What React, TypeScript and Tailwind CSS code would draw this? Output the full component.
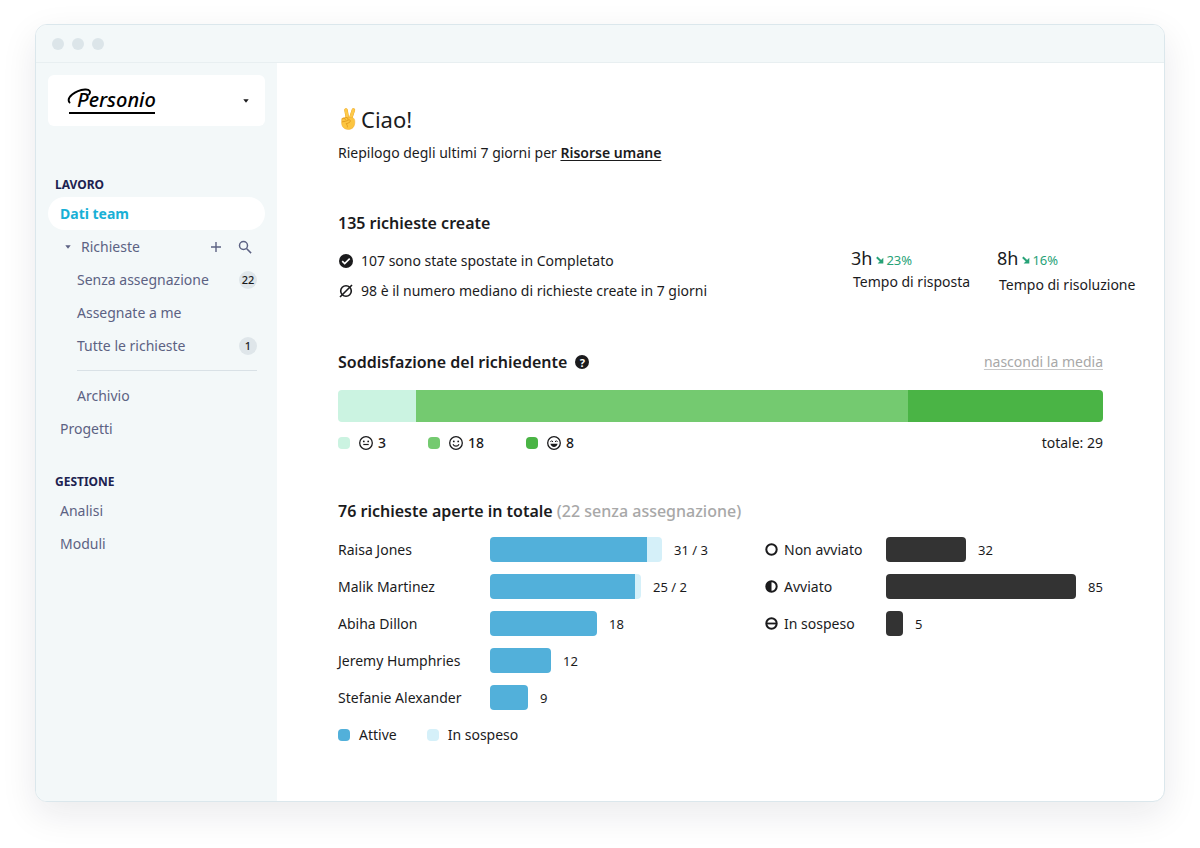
import { useState } from "react";

type NavItem = { label: string; badge?: number };

const REQUESTS: NavItem[] = [
  { label: "Senza assegnazione", badge: 22 },
  { label: "Assegnate a me" },
  { label: "Tutte le richieste", badge: 1 },
];

const ASSIGNEES = [
  { name: "Raisa Jones", active: 157, pending: 15, value: "31 / 3" },
  { name: "Malik Martinez", active: 145, pending: 6, value: "25 / 2" },
  { name: "Abiha Dillon", active: 107, pending: 0, value: "18" },
  { name: "Jeremy Humphries", active: 61, pending: 0, value: "12" },
  { name: "Stefanie Alexander", active: 38, pending: 0, value: "9" },
];

const STATUSES: { name: string; icon: "open" | "half" | "hold"; width: number; value: number }[] = [
  { name: "Non avviato", icon: "open", width: 80, value: 32 },
  { name: "Avviato", icon: "half", width: 190, value: 85 },
  { name: "In sospeso", icon: "hold", width: 17, value: 5 },
];

const RATINGS: { mood: "neutral" | "smile" | "laugh"; count: number; share: number; color: string }[] = [
  { mood: "neutral", count: 3, share: 78, color: "bg-[#cbf3e1]" },
  { mood: "smile", count: 18, share: 492, color: "bg-[#74ca70]" },
  { mood: "laugh", count: 8, share: 195, color: "bg-[#4ab445]" },
];

function Caret() {
  return (
    <svg width="6" height="4" viewBox="0 0 6 4" fill="currentColor" aria-hidden="true">
      <path d="M0.3 0.3h5.4L3 3.7z" />
    </svg>
  );
}

function VictoryHand() {
  return (
    <svg width="19" height="24" viewBox="0 0 19 24" aria-hidden="true">
      <g strokeLinecap="round" strokeLinejoin="round">
        <path d="M9.6 12 8 3" stroke="#eda62a" strokeWidth="3.6" />
        <path d="M12.4 12 15.400 3" stroke="#eda62a" strokeWidth="3.6" />
        <path d="M9.6 12 8 3" stroke="#fdca4a" strokeWidth="2.8" />
        <path d="M12.4 12 15.400 3" stroke="#fdca4a" strokeWidth="2.8" />
        <path
          d="M4.200 11.4c1.4-1 3-1.200 4.800-.8l5.200-.2c2 .6 2.800 2.400 2.600 5-.2 4.400-2.400 7-6.600 7-3.800 0-6.200-2.200-6.600-6.200-.1-2 0-3.900.6-4.800z"
          fill="#fcc540"
          stroke="#f0ab30"
          strokeWidth="0.5"
        />
        <path d="M4 12.200c1.400-1.600 3-1.200 3.400.6M7 11c1.600-1.200 3.200-.4 3 1.600" fill="none" stroke="#dd9418" strokeWidth="0.8" />
        <path d="M4.400 14.800c2.400-.4 4.600-.8 6.200-1.800 1.400-.6 2.400.8 1.400 1.900-1 1-2.600 1.500-4 1.900 1.200 1 1.600 2 1.400 3.200" fill="none" stroke="#dd9418" strokeWidth="0.8" />
      </g>
    </svg>
  );
}

function CheckIcon() {
  return (
    <svg width="14" height="14" viewBox="0 0 14 14" aria-hidden="true">
      <circle cx="7" cy="7" r="7" fill="#1b1b1d" />
      <path d="m3.200 7.200 2.500 2.400 5-5" fill="none" stroke="#fff" strokeWidth="1.600" />
    </svg>
  );
}

function MedianIcon() {
  return (
    <svg width="14" height="14" viewBox="0 0 14 14" fill="none" stroke="#1b1b1d" strokeWidth="1.600" aria-hidden="true">
      <circle cx="7" cy="7" r="5.300" />
      <path d="M1 13 13 1" />
    </svg>
  );
}

function Face({ mood }: { mood: "neutral" | "smile" | "laugh" }) {
  return (
    <svg width="14" height="14" viewBox="0 0 14 14" fill="none" stroke="#1b1b1d" strokeWidth="1.300" aria-hidden="true">
      <circle cx="7" cy="7" r="6.300" />
      {mood === "laugh" ? (
        <>
          <path d="M3.400 6 4.700 4.700 6 6M8 6l1.300-1.300L10.600 6" strokeWidth="1" />
          <path d="M3.400 7.800h7.200c-.4 2-1.800 3.200-3.600 3.200s-3.200-1.200-3.600-3.200z" fill="#1b1b1d" stroke="none" />
        </>
      ) : (
        <>
          <circle cx="4.800" cy="5.400" r="0.900" fill="#1b1b1d" stroke="none" />
          <circle cx="9.200" cy="5.400" r="0.900" fill="#1b1b1d" stroke="none" />
          {mood === "neutral" ? (
            <path d="M4.300 8.500h5.400" strokeWidth="1.200" />
          ) : (
            <path d="M4 8.200c.6 1.300 1.700 1.900 3 1.900s2.400-.6 3-1.900" strokeWidth="1.100" />
          )}
        </>
      )}
    </svg>
  );
}

function StatusIcon({ kind }: { kind: "open" | "half" | "hold" }) {
  return (
    <svg width="13" height="13" viewBox="0 0 13 13" fill="none" stroke="#1b1b1d" strokeWidth="2" aria-hidden="true">
      <circle cx="6.500" cy="6.500" r="5.200" />
      {kind === "half" && <path d="M6.500 1.300a5.200 5.200 0 0 0 0 10.400z" fill="#1b1b1d" stroke="none" />}
      {kind === "hold" && <path d="M1.300 6.500h10.400" strokeWidth="1.800" />}
    </svg>
  );
}

function TrendArrow() {
  return (
    <svg width="8" height="8" viewBox="0 0 8 8" aria-hidden="true">
      <path d="m.8 1.200 4 3.700" stroke="#27a277" strokeWidth="2" />
      <path d="M7.300 1.800v5.600H1.600z" fill="#27a277" />
    </svg>
  );
}

function Badge({ value }: { value: number }) {
  return (
    <span className="grid h-[18px] w-[18px] place-items-center rounded-full bg-[#dfe6ea] text-[11px] leading-none font-medium text-[#1b1b1d]">
      {value}
    </span>
  );
}

function Logo() {
  return (
    <span className="relative flex w-[90px] flex-col text-black">
      <svg
        className="absolute -left-px top-0"
        width="24"
        height="18"
        viewBox="0 0 24 18"
        fill="none"
        stroke="currentColor"
        strokeWidth="1.900"
        strokeLinecap="round"
        aria-hidden="true"
      >
        <path d="M2.500 14.500C-1 9.500 8 2.500 18 1.500c5-.4 6 2.500 4 5" />
      </svg>
      <span className="pl-[7px] text-[20px] leading-6 font-medium italic">Personio</span>
      <span className="ml-px h-[2px] w-[86px] bg-black" />
    </span>
  );
}

function Sidebar() {
  const [open, setOpen] = useState(true);

  return (
    <aside className="w-[241px] shrink-0 bg-[#f3f8f9] px-3 pt-3 text-[14px] leading-5 text-[#5c6283]">
      <button type="button" aria-label="Personio" className="flex h-[51px] w-full items-center justify-between rounded-md bg-white pr-4 pl-5 text-[#1b1b1d]">
        <Logo />
        <Caret />
      </button>

      <nav className="mt-[43px]">
        <h2 className="flex h-7 items-center pt-1 pl-[7px] text-[12px] font-bold text-[#1c2250]">LAVORO</h2>
        <a href="#team" className="flex h-[33px] items-center rounded-full bg-white pl-3 font-bold text-[#18b0d6]">
          Dati team
        </a>
        <div className="flex h-[33px] items-center pr-[13px] pl-[17px]">
          <button type="button" onClick={() => setOpen(!open)} className="flex flex-1 items-center gap-[10px]">
            <Caret />
            Richieste
          </button>
          <button type="button" aria-label="Aggiungi">
            <svg width="12" height="12" viewBox="0 0 12 12" stroke="currentColor" strokeWidth="1.400" aria-hidden="true">
              <path d="M6 1v10M1 6h10" />
            </svg>
          </button>
          <button type="button" aria-label="Cerca" className="ml-4">
            <svg width="14" height="14" viewBox="0 0 14 14" fill="none" stroke="currentColor" strokeWidth="1.500" aria-hidden="true">
              <circle cx="5.500" cy="5.500" r="4" />
              <path d="m8.500 8.500 4.600 4.600" />
            </svg>
          </button>
        </div>
        {open && (
          <div className="pr-2 pl-[29px]">
            {REQUESTS.map((r) => (
              <a key={r.label} href="#requests" className="flex h-[33px] items-center justify-between">
                {r.label}
                {r.badge && <Badge value={r.badge} />}
              </a>
            ))}
            <hr className="my-2 border-[#d9e1e6]" />
            <a href="#archive" className="flex h-[33px] items-center">
              Archivio
            </a>
          </div>
        )}
        <a href="#projects" className="flex h-[33px] items-center pl-3">
          Progetti
        </a>

        <h2 className="mt-[21px] flex h-7 items-center pt-1 pl-[7px] text-[12px] font-bold text-[#1c2250]">GESTIONE</h2>
        <a href="#analytics" className="flex h-[33px] items-center pl-3">
          Analisi
        </a>
        <a href="#forms" className="flex h-[33px] items-center pl-3">
          Moduli
        </a>
      </nav>
    </aside>
  );
}

function Created() {
  return (
    <section className="mt-12">
      <h2 className="text-[16px] leading-6 font-semibold">135 richieste create</h2>
      <div className="-mr-9 flex justify-between pt-[11px]">
        <ul>
          <li className="flex h-[30px] items-center gap-2 pl-px">
            <CheckIcon />
            107 sono state spostate in Completato
          </li>
          <li className="flex h-[30px] items-center gap-2 pl-px">
            <MedianIcon />
            98 è il numero mediano di richieste create in 7 giorni
          </li>
        </ul>
        <dl className="flex gap-6">
          <div className="flex w-[122px] flex-col">
            <dd className="flex h-6 items-center gap-1 text-[18px]">
              3h
              <span className="flex items-center pt-1 text-[13px] text-[#27a277]">
                <TrendArrow />
                <span className="pl-[2px]">23%</span>
              </span>
            </dd>
            <dt className="pt-[2px] pl-[2px]">Tempo di risposta</dt>
          </div>
          <div className="flex w-[142px] flex-col">
            <dd className="flex h-6 items-center gap-1 text-[18px]">
              8h
              <span className="flex items-center pt-1 text-[13px] text-[#27a277]">
                <TrendArrow />
                <span className="pl-[2px]">16%</span>
              </span>
            </dd>
            <dt className="pt-[5px] pl-[2px]">Tempo di risoluzione</dt>
          </div>
        </dl>
      </div>
    </section>
  );
}

function Satisfaction() {
  return (
    <section className="mt-11">
      <div className="flex items-center justify-between">
        <h2 className="flex items-center gap-2 text-[16px] leading-6 font-semibold">
          Soddisfazione del richiedente
          <span className="grid h-[14px] w-[14px] place-items-center rounded-full bg-[#1b1b1d] text-[11px] leading-none font-bold text-white">?</span>
        </h2>
        <button type="button" className="text-[#a8a8a8] underline decoration-[#c8c8c8] underline-offset-2">
          nascondi la media
        </button>
      </div>
      <div className="mt-4 flex h-8 overflow-hidden rounded">
        {RATINGS.map((r) => (
          <div key={r.mood} className={r.color} style={{ flexGrow: r.share }} />
        ))}
      </div>
      <div className="mt-[11px] flex items-center justify-between">
        <ul className="flex gap-[42px]">
          {RATINGS.map((r) => (
            <li key={r.mood} className="flex items-center font-medium">
              <span className={`mr-[9px] h-3 w-3 rounded ${r.color}`} />
              <Face mood={r.mood} />
              <span className="ml-[5px]">{r.count}</span>
            </li>
          ))}
        </ul>
        <span>totale: 29</span>
      </div>
    </section>
  );
}

function OpenRequests() {
  return (
    <section className="mt-[46px]">
      <h2 className="text-[16px] leading-6 font-semibold">
        76 richieste aperte in totale <span className="font-medium text-[#a8a8a8]">(22 senza assegnazione)</span>
      </h2>
      <div className="mt-[14px] flex">
        <ul className="flex w-[427px] flex-col gap-3">
          {ASSIGNEES.map((a) => (
            <li key={a.name} className="flex h-[25px] items-center">
              <span className="w-[152px]">{a.name}</span>
              <span className="flex h-full overflow-hidden rounded">
                <span className="bg-[#52b0da]" style={{ width: a.active }} />
                <span className="bg-[#d5f0f9]" style={{ width: a.pending }} />
              </span>
              <span className="ml-3 text-[13px]">{a.value}</span>
            </li>
          ))}
        </ul>
        <ul className="flex flex-col gap-3">
          {STATUSES.map((s) => (
            <li key={s.name} className="flex h-[25px] items-center">
              <span className="flex w-[121px] items-center gap-[6px]">
                <StatusIcon kind={s.icon} />
                {s.name}
              </span>
              <span className="h-full rounded bg-[#333333]" style={{ width: s.width }} />
              <span className="ml-3 text-[13px]">{s.value}</span>
            </li>
          ))}
        </ul>
      </div>
      <div className="mt-[15px] flex gap-[30px]">
        <span className="flex items-center gap-[9px]">
          <span className="h-3 w-3 rounded bg-[#52b0da]" />
          Attive
        </span>
        <span className="flex items-center gap-[9px]">
          <span className="h-3 w-3 rounded bg-[#d5f0f9]" />
          In sospeso
        </span>
      </div>
    </section>
  );
}

export default function App() {
  return (
    <div className="flex min-h-screen flex-col bg-white px-[35px] pt-6 pb-[46px] font-['Noto_Sans',sans-serif] text-[#1b1b1d]">
      <div className="flex flex-1 flex-col overflow-hidden rounded-xl border border-[#dbe7ec] bg-white shadow-[0_12px_36px_rgba(20,20,40,0.09)]">
        <div className="flex h-[38px] items-center gap-2 border-b border-[#e8eff1] bg-[#f3f8f9] px-4">
          <span className="h-3 w-3 rounded-full bg-[#dce5e9]" />
          <span className="h-3 w-3 rounded-full bg-[#dce5e9]" />
          <span className="h-3 w-3 rounded-full bg-[#dce5e9]" />
        </div>
        <div className="flex flex-1">
          <Sidebar />
          <main className="flex-1 px-[61px] pt-10 text-[14px] leading-5">
            <h1 className="flex items-center gap-1 text-[22px] leading-8">
              <VictoryHand />
              Ciao!
            </h1>
            <p className="mt-2">
              Riepilogo degli ultimi 7 giorni per{" "}
              <a href="#hr" className="font-semibold underline underline-offset-2">
                Risorse umane
              </a>
            </p>
            <Created />
            <Satisfaction />
            <OpenRequests />
          </main>
        </div>
      </div>
    </div>
  );
}
